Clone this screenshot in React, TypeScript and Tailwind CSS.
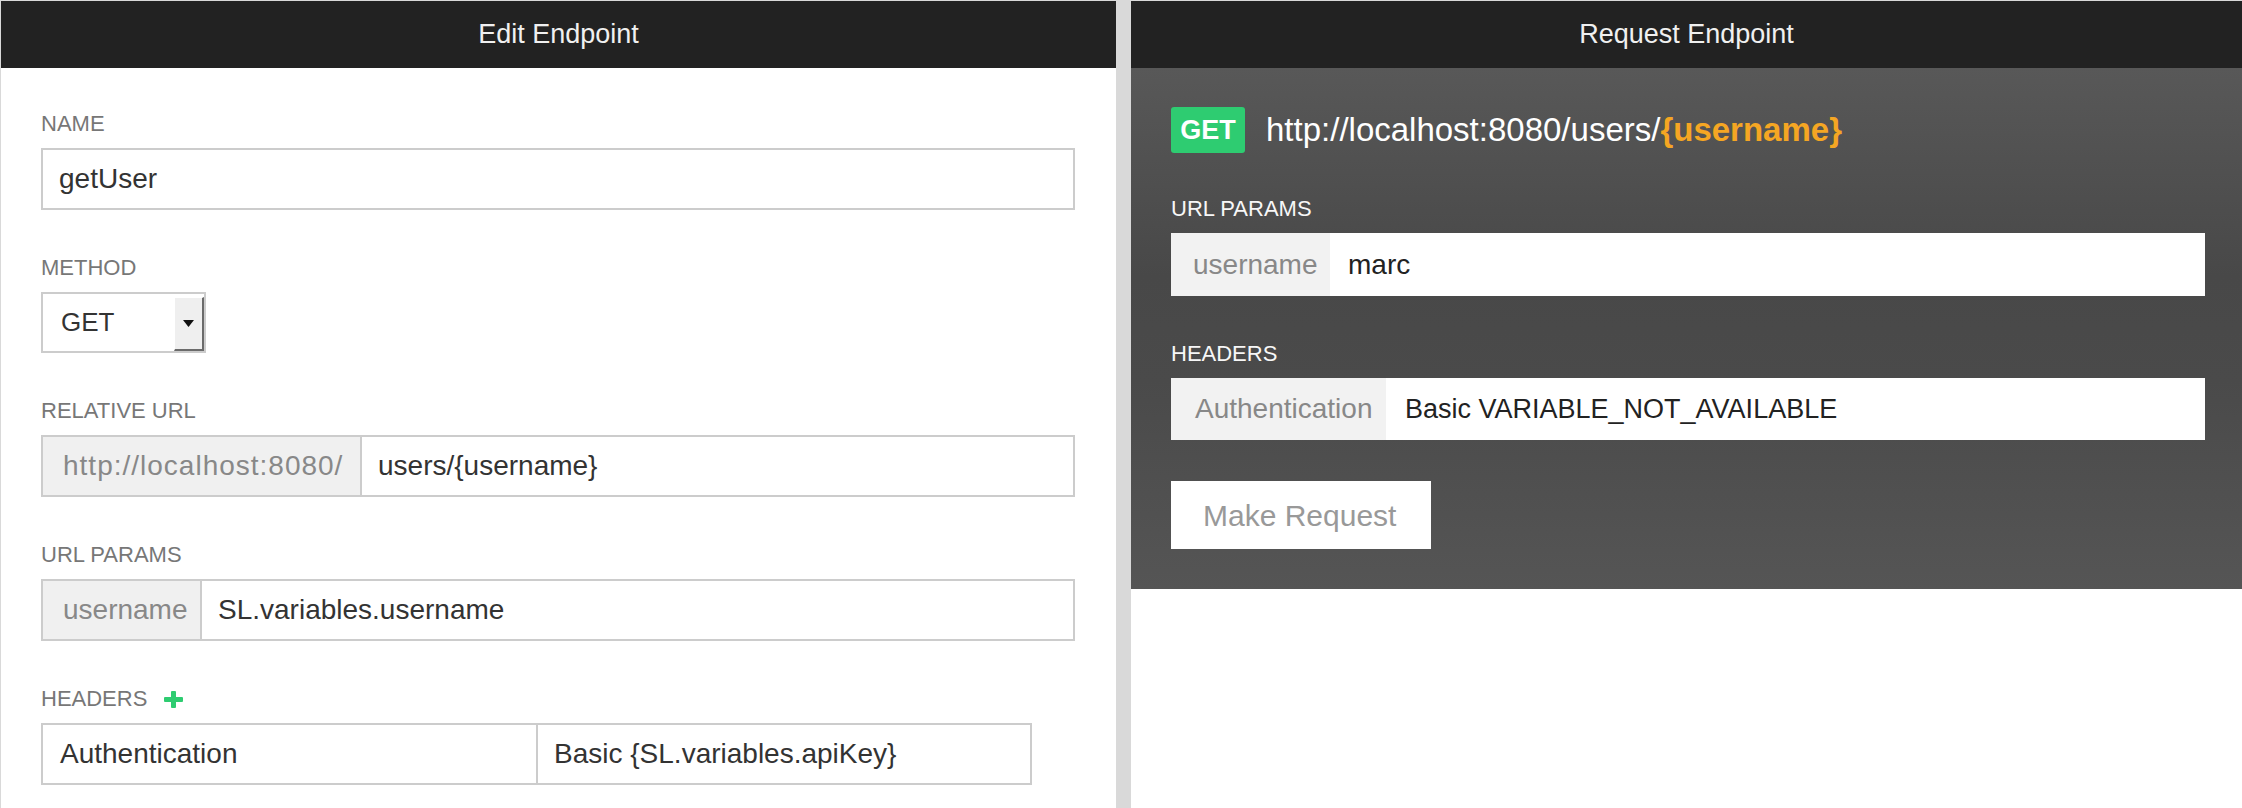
import React from "react";

const Label = ({ children, dark = false }: { children: React.ReactNode; dark?: boolean }) => (
  <div
    className={`flex items-center h-[26px] mb-[11px] text-[22px] leading-[26px] uppercase ${
      dark ? "text-[#f7f7f7]" : "text-[#777777]"
    }`}
  >
    {children}
  </div>
);

const PanelHeader = ({ title }: { title: string }) => (
  <div className="h-[67px] bg-[#222222] flex items-center justify-center text-[27px] text-[#f0f0f0]">
    {title}
  </div>
);

const PlusIcon = () => (
  <svg width="19" height="17" viewBox="0 0 19 17" className="ml-[17px]">
    <rect x="0" y="6" width="19" height="5" rx="1" fill="#2ecc71" />
    <rect x="7" y="0" width="5" height="17" rx="1" fill="#2ecc71" />
  </svg>
);

const MethodSelect = () => (
  <div className="w-[165px] h-[61px] border-2 border-[#cccccc] bg-white flex">
    <div className="flex-1 flex items-center pl-[18px] text-[26px] text-[#333333]">GET</div>
    <div className="w-[30px] mt-[3px] bg-[#efefef] border-t border-l border-t-white border-l-white border-r-2 border-b-2 border-r-[#6b6b6b] border-b-[#6b6b6b] flex items-center justify-center">
      <svg width="11" height="7" viewBox="0 0 11 7">
        <path d="M0 0 H11 L5.5 7 Z" fill="#111111" />
      </svg>
    </div>
  </div>
);

const EditEndpoint = () => (
  <div className="w-[1115px] bg-white flex flex-col">
    <PanelHeader title="Edit Endpoint" />
    <div className="pl-[40px] pr-[41px] pt-[43px] flex flex-col gap-[45px]">
      {/* Name */}
      <div>
        <Label>Name</Label>
        <div className="h-[62px] border-2 border-[#cccccc] flex items-center pl-[16px] text-[28px] text-[#333333]">
          getUser
        </div>
      </div>

      {/* Method */}
      <div>
        <Label>Method</Label>
        <MethodSelect />
      </div>

      {/* Relative URL */}
      <div>
        <Label>Relative URL</Label>
        <div className="h-[62px] border-2 border-[#cccccc] flex text-[28px]">
          <div className="w-[319px] bg-[#f0f0f0] border-r-2 border-[#cccccc] flex items-center pl-[20px] text-[#888888] tracking-[1px]">
            http://localhost:8080/
          </div>
          <div className="flex-1 flex items-center pl-[16px] text-[#333333]">users/{"{username}"}</div>
        </div>
      </div>

      {/* URL params */}
      <div>
        <Label>URL Params</Label>
        <div className="h-[62px] border-2 border-[#cccccc] flex text-[28px]">
          <div className="w-[159px] bg-[#f0f0f0] border-r-2 border-[#cccccc] flex items-center pl-[20px] text-[#888888]">
            username
          </div>
          <div className="flex-1 flex items-center pl-[16px] text-[#333333]">SL.variables.username</div>
        </div>
      </div>

      {/* Headers */}
      <div>
        <Label>
          Headers
          <PlusIcon />
        </Label>
        <div className="w-[991px] h-[62px] border-2 border-[#cccccc] flex text-[28px] text-[#333333]">
          <div className="flex-1 border-r-2 border-[#cccccc] flex items-center pl-[17px]">Authentication</div>
          <div className="flex-1 flex items-center pl-[16px]">Basic {"{SL.variables.apiKey}"}</div>
        </div>
      </div>
    </div>
  </div>
);

const RequestEndpoint = () => (
  <div className="flex-1 bg-white flex flex-col">
    <PanelHeader title="Request Endpoint" />
    <div className="pl-[40px] pr-[37px] pt-[39px] pb-[40px] bg-[linear-gradient(180deg,#585858_0%,#484848_40%,#4a4a4a_60%,#555555_100%)]">
      <div className="h-[46px] flex items-center gap-[21px] mb-[43px]">
        <div className="w-[74px] h-[46px] rounded-[3px] bg-[#2ecc71] flex items-center justify-center text-[27px] font-bold text-white">
          GET
        </div>
        <div className="text-[33px] text-white">
          http://localhost:8080/users/<span className="font-bold text-[#f5a623]">{"{username}"}</span>
        </div>
      </div>

      <Label dark>URL Params</Label>
      <div className="h-[63px] bg-white flex text-[28px]">
        <div className="w-[159px] bg-[#f2f2f2] flex items-center pl-[22px] text-[#888888]">username</div>
        <div className="flex-1 flex items-center pl-[18px] text-[#222222]">marc</div>
      </div>

      <div className="mt-[45px]">
        <Label dark>Headers</Label>
        <div className="h-[62px] bg-white flex text-[28px]">
          <div className="w-[215px] bg-[#f2f2f2] flex items-center pl-[24px] text-[#888888]">Authentication</div>
          <div className="flex-1 flex items-center pl-[19px] text-[27px] text-[#222222]">Basic VARIABLE_NOT_AVAILABLE</div>
        </div>
      </div>

      <button className="mt-[41px] w-[260px] h-[68px] bg-white text-left pl-[32px] text-[30px] text-[#999999]">
        Make Request
      </button>
    </div>
  </div>
);

export default function App() {
  return (
    <div className="w-[2242px] h-[808px] overflow-hidden bg-[#d9d9d9] pt-[1px] pl-[1px] flex gap-[15px] font-['Liberation_Sans',Arial,sans-serif]">
      <EditEndpoint />
      <RequestEndpoint />
    </div>
  );
}
